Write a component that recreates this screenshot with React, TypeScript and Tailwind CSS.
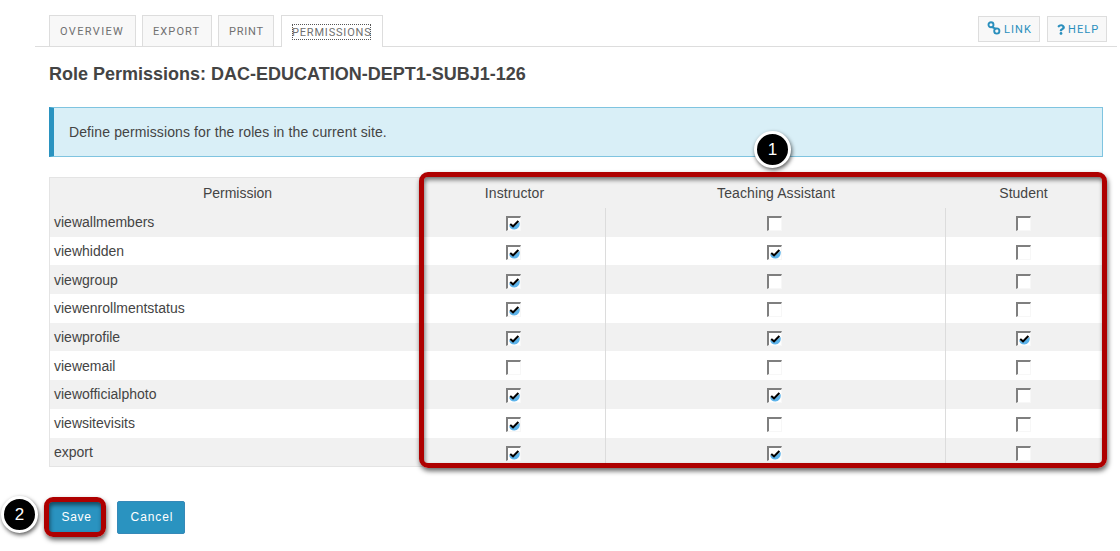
import { FaQuestion } from "react-icons/fa";

const rows: { name: string; checks: boolean[] }[] = [
  { name: "viewallmembers", checks: [true, false, false] },
  { name: "viewhidden", checks: [true, true, false] },
  { name: "viewgroup", checks: [true, false, false] },
  { name: "viewenrollmentstatus", checks: [true, false, false] },
  { name: "viewprofile", checks: [true, true, true] },
  { name: "viewemail", checks: [false, false, false] },
  { name: "viewofficialphoto", checks: [true, true, false] },
  { name: "viewsitevisits", checks: [true, false, false] },
  { name: "export", checks: [true, true, false] },
];

function Check({ on }: { on: boolean }) {
  return (
    <span
      role="checkbox"
      aria-checked={on}
      className="mt-[3px] mr-[1.5px] block size-[15px] border-t-2 border-r border-b border-l-2 border-t-[#7f7f7f] border-r-[#f7f7f7] border-b-[#f7f7f7] border-l-[#7f7f7f] bg-white"
    >
      {on && (
        <svg viewBox="0 0 12 12" className="block size-3">
          <path d="M1 7 L5 9 L11.6 4 C12.4 7.5 10.5 11.5 6.3 11.5 C3.5 11.5 1.5 10 1 7Z" fill="#5cb3ea" />
          <path d="M2.2 6 L5 8.4 L10.4 3" fill="none" stroke="#000" strokeWidth="2.1" />
        </svg>
      )}
    </span>
  );
}

function ChainIcon() {
  return (
    <svg viewBox="0 0 14 14" className="mb-[2px] size-[14px]" fill="none" stroke="currentColor" strokeWidth="1.9">
      <circle cx="4" cy="3.8" r="2.5" />
      <circle cx="9.8" cy="10" r="2.6" />
      <path d="M4.5 5.8 L9.5 8.2" />
    </svg>
  );
}

function Badge({ n, className }: { n: number; className: string }) {
  return (
    <span
      className={`absolute flex size-[37px] items-center justify-center rounded-full border-3 border-white bg-black text-[17px] leading-none text-white shadow-[1px_2px_4px_rgba(0,0,0,0.65)] ${className}`}
    >
      {n}
    </span>
  );
}

const tab =
  "flex h-[31px] items-center border border-b-0 border-[#ddd] bg-[#f8f8f8] pt-[2px] pl-[10px] font-['Roboto',sans-serif] text-[11px] text-[#707070]";
const tool =
  "flex h-[26px] items-center border border-[#ddd] bg-[#f8f8f8] font-['Roboto',sans-serif] text-[11px] tracking-[1.1px] text-[#2a8fbd]";
const columns = "grid grid-cols-[373px_183px_340px_156px]";

export default function App() {
  return (
    <div className="relative h-[551px] w-[1120px] overflow-hidden bg-white font-['Liberation_Sans',Arial,sans-serif] text-[#444]">
      <header className="ml-[35px] flex h-[47px] w-[1082px] items-end border-b border-[#ddd] pl-[14px]">
        <nav className="flex">
          <a className={`${tab} mr-[6px] w-[87px] tracking-[1.35px]`}>OVERVIEW</a>
          <a className={`${tab} mr-[6px] w-[70px] tracking-[1.1px]`}>EXPORT</a>
          <a className={`${tab} mr-[7px] w-[56px] tracking-[0.8px]`}>PRINT</a>
          <a className="-mb-px flex h-8 w-[102px] items-center border border-b-0 border-[#ddd] bg-white pl-[10px] font-['Roboto',sans-serif] text-[11px] text-[#707070]">
            <span className="mt-px flex h-4 w-[79px] items-center pt-[2px] tracking-[0.82px] outline-1 -outline-offset-1 outline-[#555] outline-dotted">
              PERMISSIONS
            </span>
          </a>
        </nav>
        <div className="mr-[10px] mb-1 ml-auto flex gap-[7px]">
          <a className={`${tool} w-[62px] gap-[3px] pl-[8px]`}>
            <ChainIcon />
            <span className="mt-[3px]">LINK</span>
          </a>
          <a className={`${tool} w-[60px] gap-[3px] pl-[9px]`}>
            <FaQuestion className="h-[11px] w-[8px]" />
            <span className="mt-[3px]">HELP</span>
          </a>
        </div>
      </header>

      <main className="ml-[49px] w-[1054px]">
        <h1 className="mt-[15px] h-[45px] text-[18px] leading-[24px] font-bold">
          Role Permissions: DAC-EDUCATION-DEPT1-SUBJ1-126
        </h1>
        <p className="flex h-[50px] items-center border border-l-[5px] border-[#7fc4e0] border-l-[#2a93c0] bg-[#d9eff7] pl-[15px] text-[14px] tracking-[0.11px]">
          Define permissions for the roles in the current site.
        </p>

        <section className="mt-5 h-[290px] border border-[#e4e4e4] text-[14px]">
          <div className={`${columns} h-[30px] items-center bg-[#f1f1f1] text-center`}>
            <span className="pl-[2px]">Permission</span>
            <span className="tracking-[0.1px]">Instructor</span>
            <span className="tracking-[0.1px]">Teaching Assistant</span>
            <span className="pr-px">Student</span>
          </div>
          {rows.map((row) => (
            <div key={row.name} className={`${columns} h-[28.7px] odd:bg-white even:bg-[#f1f1f1]`}>
              <span className="flex items-center pt-[0.6px] pl-1">{row.name}</span>
              {row.checks.map((on, i) => (
                <span
                  key={i}
                  className="flex items-center justify-center border-r border-[#dcdcdc] last:border-r-0"
                >
                  <Check on={on} />
                </span>
              ))}
            </div>
          ))}
        </section>

        <div className="mt-[34px] flex gap-[15px] text-[12px] text-white">
          <button className="h-[33px] w-[53px] rounded-[2px] bg-[#2a93c0] pb-[2px] pl-[2px] tracking-[0.7px]">
            Save
          </button>
          <button className="h-[33px] w-[68px] rounded-[2px] border border-[#3689b8] bg-[#2a93c0] pb-[2px] pl-[2px] tracking-[0.9px]">
            Cancel
          </button>
        </div>
      </main>

      <div className="pointer-events-none absolute top-[172px] left-[419px] h-[296px] w-[688px] rounded-[9px] border-5 border-[#ae0000] shadow-[1px_3px_5px_rgba(0,0,0,0.6),inset_1px_3px_4px_rgba(0,0,0,0.5)]" />
      <div className="pointer-events-none absolute top-[497px] left-[44px] h-[40px] w-[62px] rounded-[9px] border-5 border-[#ae0000] shadow-[1px_3px_5px_rgba(0,0,0,0.6),inset_1px_3px_4px_rgba(0,0,0,0.5)]" />
      <Badge n={1} className="top-[131px] left-[754px]" />
      <Badge n={2} className="top-[496px] left-[1px]" />
    </div>
  );
}
